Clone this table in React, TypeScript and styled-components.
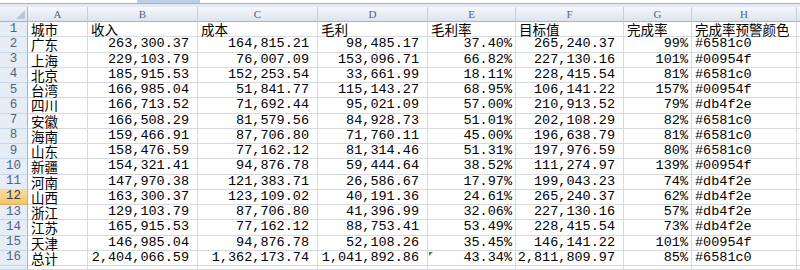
import React from 'react';
import styled, { createGlobalStyle, css } from 'styled-components';

const GlobalStyle = createGlobalStyle`
  html, body {
    margin: 0;
    padding: 0;
    background: #ffffff;
    overflow: hidden;
  }
`

const COLS = ['A', 'B', 'C', 'D', 'E', 'F', 'G', 'H']

type Align = 'text' | 'num' | 'pct'

const rows: string[][] = [
  ['广东', '263,300.37', '164,815.21', '98,485.17', '37.40%', '265,240.37', '99%', '#6581c0'],
  ['上海', '229,103.79', '76,007.09', '153,096.71', '66.82%', '227,130.16', '101%', '#00954f'],
  ['北京', '185,915.53', '152,253.54', '33,661.99', '18.11%', '228,415.54', '81%', '#6581c0'],
  ['台湾', '166,985.04', '51,841.77', '115,143.27', '68.95%', '106,141.22', '157%', '#00954f'],
  ['四川', '166,713.52', '71,692.44', '95,021.09', '57.00%', '210,913.52', '79%', '#db4f2e'],
  ['安徽', '166,508.29', '81,579.56', '84,928.73', '51.01%', '202,108.29', '82%', '#6581c0'],
  ['海南', '159,466.91', '87,706.80', '71,760.11', '45.00%', '196,638.79', '81%', '#6581c0'],
  ['山东', '158,476.59', '77,162.12', '81,314.46', '51.31%', '197,976.59', '80%', '#6581c0'],
  ['新疆', '154,321.41', '94,876.78', '59,444.64', '38.52%', '111,274.97', '139%', '#00954f'],
  ['河南', '147,970.38', '121,383.71', '26,586.67', '17.97%', '199,043.23', '74%', '#db4f2e'],
  ['山西', '163,300.37', '123,109.02', '40,191.36', '24.61%', '265,240.37', '62%', '#db4f2e'],
  ['浙江', '129,103.79', '87,706.80', '41,396.99', '32.06%', '227,130.16', '57%', '#db4f2e'],
  ['江苏', '165,915.53', '77,162.12', '88,753.41', '53.49%', '228,415.54', '73%', '#db4f2e'],
  ['天津', '146,985.04', '94,876.78', '52,108.26', '35.45%', '146,141.22', '101%', '#00954f'],
  ['总计', '2,404,066.59', '1,362,173.74', '1,041,892.86', '43.34%', '2,811,809.97', '85%', '#6581c0'],
]

const titles = ['城市', '收入', '成本', '毛利', '毛利率', '目标值', '完成率', '完成率预警颜色']

const aligns: Align[] = ['text', 'num', 'num', 'num', 'pct', 'num', 'pct', 'text']

const Window = styled.div`
  width: 800px;
  height: 270px;
  display: flex;
  flex-direction: column;
  overflow: hidden;
`

const FormulaEdge = styled.div`
  height: 3px;
  background: #ffffff;
  display: flex;
  padding-left: 137px;
`

const BarTab = styled.div`
  width: 63px;
  background: #bccfe6;
`

const EdgeLine = styled.div`
  height: 1px;
  background: #9fb3cb;
`

const EdgeGap = styled.div`
  height: 3px;
  background: #e2e9f3;
`

const Sheet = styled.div`
  flex: 1;
  display: grid;
  grid-template-columns: 28px 60px 110px 120px 110px 88px 108px 68px 105px 1fr;
  grid-template-rows: 15px repeat(16, 15.25px) 1fr;
`

const headerBase = css`
  box-sizing: border-box;
  display: flex;
  align-items: center;
  justify-content: center;
  color: #4f6380;
  overflow: hidden;
  line-height: 13px;
`

const Corner = styled.div`
  ${headerBase};
  position: relative;
  background: linear-gradient(#f3f6fa, #dde5ef);
  border-right: 1px solid #9eb6ce;
  border-bottom: 1px solid #9eb6ce;
  &::after {
    content: '';
    position: absolute;
    right: 2px;
    bottom: 2px;
    border-left: 9px solid transparent;
    border-bottom: 9px solid #b9c5d4;
  }
`

const ColHeader = styled.div`
  ${headerBase};
  background: linear-gradient(#f6f8fb, #dce4ee);
  border-right: 1px solid #c1d0e1;
  border-bottom: 1px solid #9eb6ce;
  font-family: "Liberation Serif", serif;
  font-size: 11px;
`

const RowHeader = styled.div<{ $active?: boolean }>`
  ${headerBase};
  background: ${p => (p.$active ? 'linear-gradient(#f9dca3, #f2c466)' : '#e6edf6')};
  border-right: 1px solid #9eb6ce;
  border-bottom: 1px solid ${p => (p.$active ? '#e3b05a' : '#c9d6e6')};
  color: ${p => (p.$active ? '#3a3a3a' : '#4f6380')};
  font-family: "Liberation Mono", monospace;
  font-size: 12.5px;
`

const Cell = styled.div<{ $align?: Align; $title?: boolean }>`
  box-sizing: border-box;
  position: relative;
  display: flex;
  align-items: center;
  justify-content: ${p => (p.$align === 'text' || !p.$align ? 'flex-start' : 'flex-end')};
  padding-left: 3px;
  padding-right: ${p => (p.$align === 'num' ? '8px' : '3px')};
  border-right: 1px solid #d6d9de;
  border-bottom: 1px solid #d6d9de;
  white-space: nowrap;
  overflow: visible;
  line-height: 14px;
  color: #000000;
  font-family: ${p =>
    p.$title ? '"Noto Sans CJK SC", sans-serif' : '"Liberation Mono", "Noto Sans CJK SC", monospace'};
  font-size: 13.5px;
`

const ErrorFlag = styled.span`
  position: absolute;
  left: 1px;
  top: 1px;
  border-top: 4px solid #2f9a3a;
  border-right: 4px solid transparent;
`

const App: React.FC = () => {
  return (
    <Window>
      <GlobalStyle />
      <FormulaEdge>
        <BarTab />
      </FormulaEdge>
      <EdgeLine />
      <EdgeGap />
      <Sheet>
        <Corner />
        {COLS.map(c => (
          <ColHeader key={c}>{c}</ColHeader>
        ))}
        <ColHeader />

        <RowHeader>1</RowHeader>
        {titles.map(t => (
          <Cell key={t} $align="text" $title>
            {t}
          </Cell>
        ))}
        <Cell />

        {rows.map((row, i) => {
          const n = i + 2
          return (
            <React.Fragment key={n}>
              <RowHeader $active={n === 12}>{n}</RowHeader>
              {row.map((v, j) => (
                <Cell key={j} $align={aligns[j]} $title={j === 0}>
                  {n === 16 && j === 4 && <ErrorFlag />}
                  {v}
                </Cell>
              ))}
              <Cell />
            </React.Fragment>
          )
        })}

        {/* partly visible row 17, cut by the window */}
        <RowHeader />
        {COLS.map(c => (
          <Cell key={c} />
        ))}
        <Cell />
      </Sheet>
    </Window>
  )
}

export default App
